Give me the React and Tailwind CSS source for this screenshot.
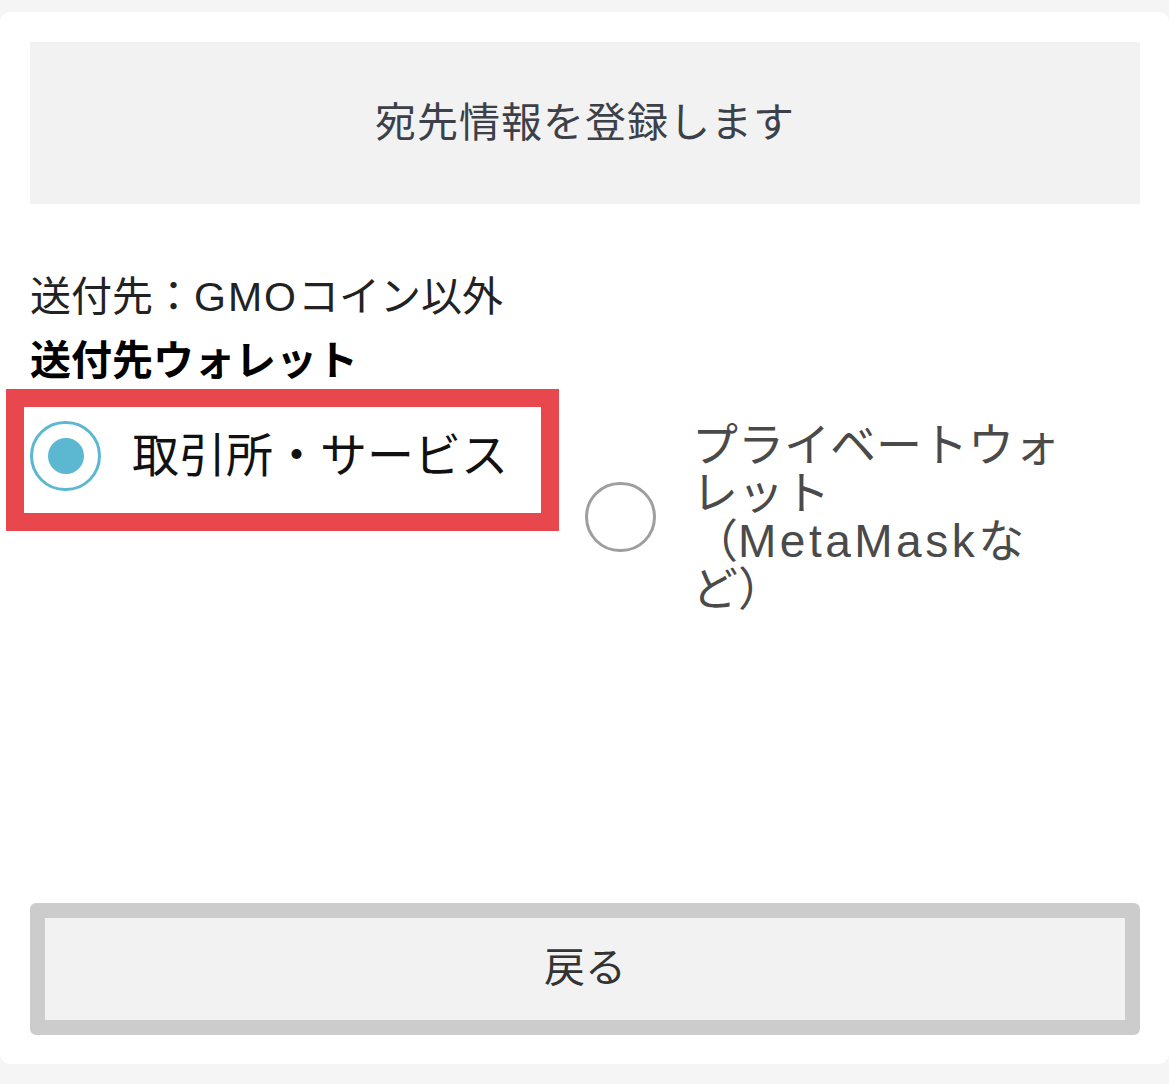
const FONT = { fontFamily: '"Liberation Sans", "Noto Sans CJK JP", sans-serif' }

function Radio({ checked }) {
  return (
    <div
      className={
        'w-[71px] h-[70px] shrink-0 rounded-full border-[3px] flex items-center justify-center bg-white ' +
        (checked ? 'border-[#5bb8d0]' : 'border-[#9e9e9e]')
      }
    >
      {checked && <div className="w-[36px] h-[36px] rounded-full bg-[#5bb8d0]" />}
    </div>
  )
}

export default function App() {
  return (
    <div className="min-h-screen bg-[#f5f5f5] pt-[12px]" style={FONT}>
      <div className="h-[1052px] bg-white rounded-[10px] pl-[30px] pr-[29px] pt-[30px] pb-[29px] flex flex-col">
        {/* header banner */}
        <div className="h-[162px] bg-[#f2f2f2] flex items-center justify-center">
          <h1 className="text-[41px] leading-none text-[#3c4048] tracking-[1px]">宛先情報を登録します</h1>
        </div>

        <p className="mt-[61px] text-[41px] leading-[64px] text-[#222]">
          <span>送付先：</span>
          <span className="tracking-[2px]">GMO</span>
          <span>コイン以外</span>
        </p>
        <p className="text-[41px] leading-[64px] font-bold text-black">送付先ウォレット</p>

        {/* wallet type options */}
        <div className="mt-[28px] flex items-start">
          <label className="relative w-[555px] flex items-center gap-[31px]">
            <div className="absolute -left-[24px] -top-[32px] w-[553px] h-[142px] border-[18px] border-[#e8474e]" />
            <Radio checked />
            <span className="text-[47px] leading-[70px] text-[#111]">取引所・サービス</span>
          </label>
          <label className="w-[555px] flex items-center gap-[36px]">
            <Radio />
            <div className="w-[370px] text-[46px] leading-[48px] text-[#4a4a4a]">
              <span>プライベートウォレット</span>
              <span>（</span>
              <span className="tracking-[3.5px]">MetaMask</span>
              <span>な</span>
              <span>ど）</span>
            </div>
          </label>
        </div>

        {/* back button */}
        <button className="mt-auto h-[132px] w-full rounded-[6px] border-[15px] border-[#cccccc] bg-[#f2f2f2] text-[41px] text-[#333]">
          戻る
        </button>
      </div>
    </div>
  )
}
